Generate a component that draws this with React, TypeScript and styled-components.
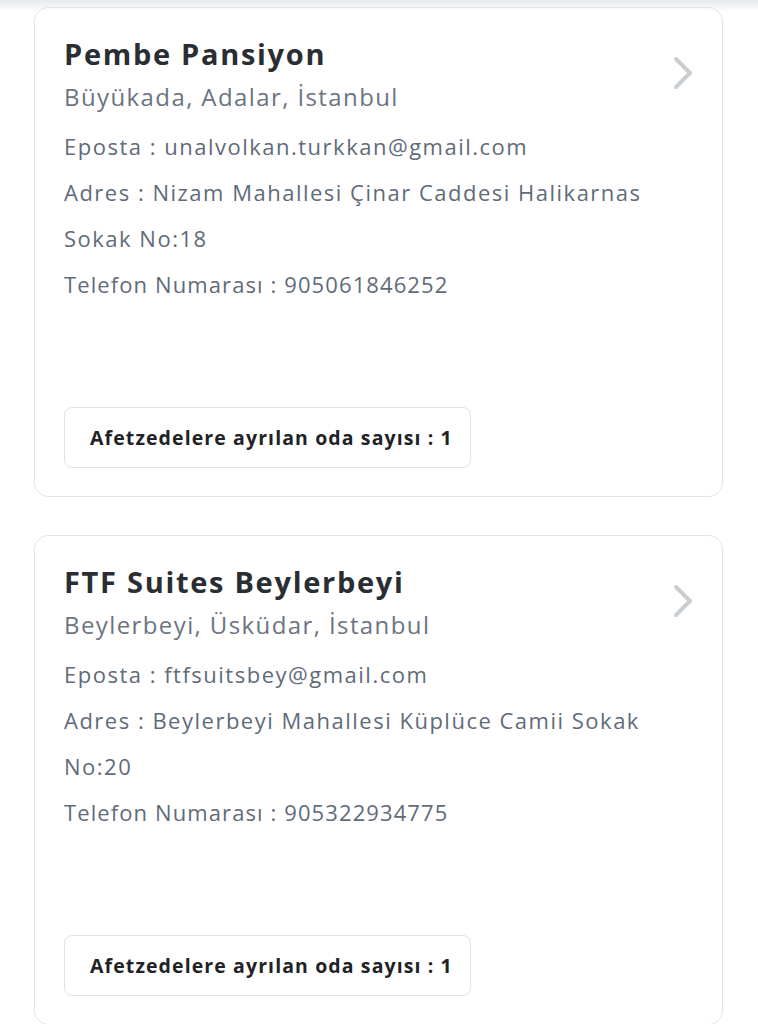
import React from "react";
import styled, { createGlobalStyle } from "styled-components";

const Global = createGlobalStyle`
  html, body { margin: 0; padding: 0; background: #ffffff; }
  body { font-family: "Open Sans", "Noto Sans", sans-serif; }
  * { box-sizing: border-box; }
`;

const TopShade = styled.div`
  position: fixed;
  top: 0;
  left: 0;
  right: 0;
  height: 12px;
  background: linear-gradient(to bottom, rgba(228, 232, 236, 0.95), rgba(255, 255, 255, 0));
  pointer-events: none;
  z-index: 2;
`;

const List = styled.main`
  display: flex;
  flex-direction: column;
  gap: 38px;
  padding: 7px 35px 40px 34px;
`;

const Card = styled.section`
  border: 1.5px solid #e2e4e7;
  border-radius: 14px;
  padding: 29px 28px 28px 29px;
  background: #fff;
`;

const Head = styled.div`
  display: flex;
  align-items: flex-start;
  justify-content: space-between;
`;

const Info = styled.div`
  display: flex;
  flex-direction: column;
`;

const Title = styled.h2`
  margin: 0;
  font-size: 29px;
  line-height: 34px;
  font-weight: 700;
  color: #2a2e33;
  letter-spacing: 1.7px;
`;

const Location = styled.div`
  margin-top: 11px;
  font-size: 24px;
  line-height: 30px;
  color: #6b7480;
  letter-spacing: 1.4px;
`;

const Details = styled.div`
  margin-top: 11px;
  width: 600px;
  font-size: 22px;
  line-height: 46px;
  color: #5f6b79;
  letter-spacing: 1.5px;
`;

const Line = styled.div<{ $tight?: boolean }>`
  letter-spacing: ${(p) => (p.$tight ? "1.1px" : "1.5px")};
`;

const Chevron = styled.svg`
  flex: none;
  margin-top: 19px;
`;

const RoomBox = styled.div`
  margin-top: 100px;
  width: 407px;
  height: 61px;
  border: 1.5px solid #dfe2e5;
  border-radius: 8px;
  display: flex;
  align-items: center;
  padding-left: 25px;
  font-size: 19.5px;
  font-weight: 700;
  color: #1f2226;
  letter-spacing: 1.1px;
`;

type Hotel = {
  name: string;
  location: string;
  email: string;
  address: string;
  phone: string;
  rooms: number;
};

const hotels: Hotel[] = [
  {
    name: "Pembe Pansiyon",
    location: "Büyükada, Adalar, İstanbul",
    email: "unalvolkan.turkkan@gmail.com",
    address: "Nizam Mahallesi Çinar Caddesi Halikarnas Sokak No:18",
    phone: "905061846252",
    rooms: 1,
  },
  {
    name: "FTF Suites Beylerbeyi",
    location: "Beylerbeyi, Üsküdar, İstanbul",
    email: "ftfsuitsbey@gmail.com",
    address: "Beylerbeyi Mahallesi Küplüce Camii Sokak No:20",
    phone: "905322934775",
    rooms: 1,
  },
];

function HotelCard({ h }: { h: Hotel }) {
  return (
    <Card>
      <Head>
        <Info>
          <Title>{h.name}</Title>
          <Location>{h.location}</Location>
          <Details>
            <Line>{`Eposta : ${h.email}`}</Line>
            <Line>{`Adres : ${h.address}`}</Line>
            <Line $tight>{`Telefon Numarası : ${h.phone}`}</Line>
          </Details>
        </Info>
        <Chevron width="22" height="34" viewBox="0 0 22 34">
          <path d="M4 3 L18 17 L4 31" fill="none" stroke="#c9ced3" strokeWidth="4" strokeLinecap="round" strokeLinejoin="round" />
        </Chevron>
      </Head>
      <RoomBox>{`Afetzedelere ayrılan oda sayısı : ${h.rooms}`}</RoomBox>
    </Card>
  );
}

export default function App() {
  return (
    <>
      <Global />
      <TopShade />
      <List>
        {hotels.map((h) => (
          <HotelCard key={h.name} h={h} />
        ))}
      </List>
    </>
  );
}
